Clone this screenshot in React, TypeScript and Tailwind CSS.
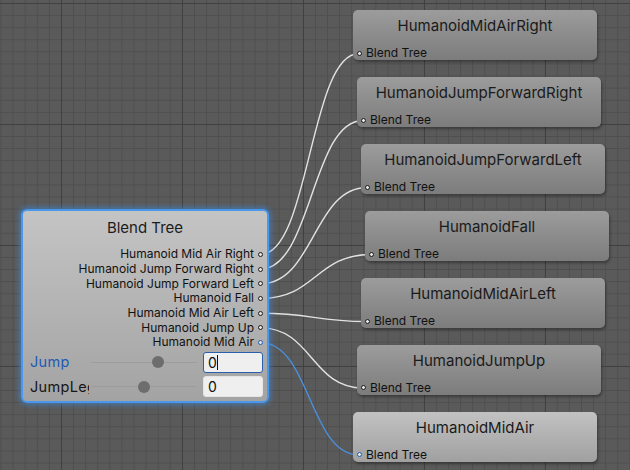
import React from "react";

const outputs = [
    { label: "Humanoid Mid Air Right", target: "HumanoidMidAirRight", left: 353, top: 10 },
    { label: "Humanoid Jump Forward Right", target: "HumanoidJumpForwardRight", left: 357, top: 77 },
    { label: "Humanoid Jump Forward Left", target: "HumanoidJumpForwardLeft", left: 361, top: 144 },
    { label: "Humanoid Fall", target: "HumanoidFall", left: 365, top: 211 },
    { label: "Humanoid Mid Air Left", target: "HumanoidMidAirLeft", left: 361, top: 278 },
    { label: "Humanoid Jump Up", target: "HumanoidJumpUp", left: 357, top: 344.5 },
    { label: "Humanoid Mid Air", target: "HumanoidMidAir", left: 353, top: 411.5, active: true },
];

const fromX = 260.5;
const fromY = (i: number) => 254.4 + i * 14.7;

function Port({ blue }: { blue?: boolean }) {
    return <span className={`block w-[5px] h-[5px] shrink-0 rounded-full border ${blue ? "border-[#1f5fb0] bg-[#e6e6e6]" : "border-[#1a1a1a] bg-[#e6e6e6]"}`} />
}

function Slider({ knob }: { knob: number }) {
    return <div className="relative w-[106px] h-[21px] ml-[2px] flex items-center">
        <div className="w-full h-[1px] bg-[#9c9c9c]" />
        <span className="absolute top-[4.5px] w-[12px] h-[12px] rounded-full bg-[#6d6d6d]" style={{ left: knob }} />
    </div>
}

function BlendTreeNode() {
    return <div className="absolute left-[21px] top-[209px] w-[248px] h-[194px] rounded-[6px] border-2 border-[#4a98ec] shadow-[0_0_5px_2px_rgba(60,140,230,0.55)] bg-[linear-gradient(to_bottom,#c4c4c4,#a3a3a3)] flex flex-col text-[#111]">
        <div className="h-[34px] flex items-center justify-center text-[15px] text-[#1c1c1c]">Blend Tree</div>
        <div className="mt-[2px] flex flex-col">
            {outputs.map((o) => (
                <div key={o.label} className="h-[14.7px] flex items-center justify-end gap-[4px] pr-[4px] text-[12px] leading-none">
                    <span>{o.label}</span>
                    <Port blue={o.active} />
                </div>
            ))}
        </div>
        <div className="mt-[2px] flex flex-col gap-[3.3px] pl-[7px] pr-[4px]">
            <div className="h-[21px] flex items-center">
                <span className="w-[59px] overflow-hidden whitespace-nowrap text-[14.5px] tracking-[0.3px] text-[#1d5bb5]">Jump</span>
                <Slider knob={61} />
                <div className="ml-[6px] w-[60px] h-[21px] rounded-[3px] border border-[#2a5fae] bg-[#efefef] flex items-center pl-[4px] text-[14px] text-[#111]">
                    <span>0</span>
                    <span className="w-[1px] h-[15px] bg-[#111]" />
                </div>
            </div>
            <div className="h-[21px] flex items-center">
                <span className="w-[59px] overflow-hidden whitespace-nowrap text-[14.5px] tracking-[0.3px] text-[#151515]">JumpLeg</span>
                <Slider knob={47} />
                <div className="ml-[6px] w-[60px] h-[21px] rounded-[3px] border border-[#e4e4e4] bg-[#efefef] flex items-center pl-[4px] text-[14px] text-[#111]">
                    <span>0</span>
                </div>
            </div>
        </div>
    </div>
}

function ClipNode({ title, left, top, active }: { title: string, left: number, top: number, active?: boolean }) {
    return <div className={`absolute w-[244px] h-[50px] rounded-[5px] shadow-[1px_2px_3px_rgba(0,0,0,0.35)] flex flex-col ${active ? "bg-[linear-gradient(to_bottom,#c2c2c2,#a0a0a0)]" : "bg-[linear-gradient(to_bottom,#9c9c9c,#7c7c7c)]"}`} style={{ left, top }}>
        <div className="h-[34px] flex items-center justify-center text-[15px] text-[#1a1a1a]">{title}</div>
        <div className="mt-[3px] h-[14px] flex items-center gap-[4px] pl-[4px] text-[12px] leading-none text-[#111]">
            <Port blue={active} />
            <span>Blend Tree</span>
        </div>
    </div>
}

export default function App() {
    return <div className="relative w-[630px] h-[470px] overflow-hidden font-['Inter','Liberation_Sans',sans-serif] bg-[#5a5a5a] [background-image:linear-gradient(to_right,#414141_1px,transparent_1px),linear-gradient(to_bottom,#414141_1px,transparent_1px),linear-gradient(to_right,#4f4f4f_1px,transparent_1px),linear-gradient(to_bottom,#4f4f4f_1px,transparent_1px)] [background-size:121px_121px,121px_121px,12.1px_12.1px,12.1px_12.1px] [background-position:61px_3px,61px_3px,0.5px_3px,0.5px_3px]">
        <svg className="absolute inset-0" width="630" height="470">
            {outputs.map((o, i) => {
                const x0 = fromX, y0 = fromY(i);
                const x1 = o.left + 6, y1 = o.top + 43.5;
                const d = (x1 - x0) / 2;
                return <path key={o.target} d={`M${x0} ${y0} C${x0 + d} ${y0} ${x1 - d} ${y1} ${x1} ${y1}`} fill="none" stroke={o.active ? "#4b8fdc" : "#e2e2e2"} strokeWidth="1.4" />
            })}
        </svg>
        <BlendTreeNode />
        {outputs.map((o) => (
            <ClipNode key={o.target} title={o.target} left={o.left} top={o.top} active={o.active} />
        ))}
    </div>
}
